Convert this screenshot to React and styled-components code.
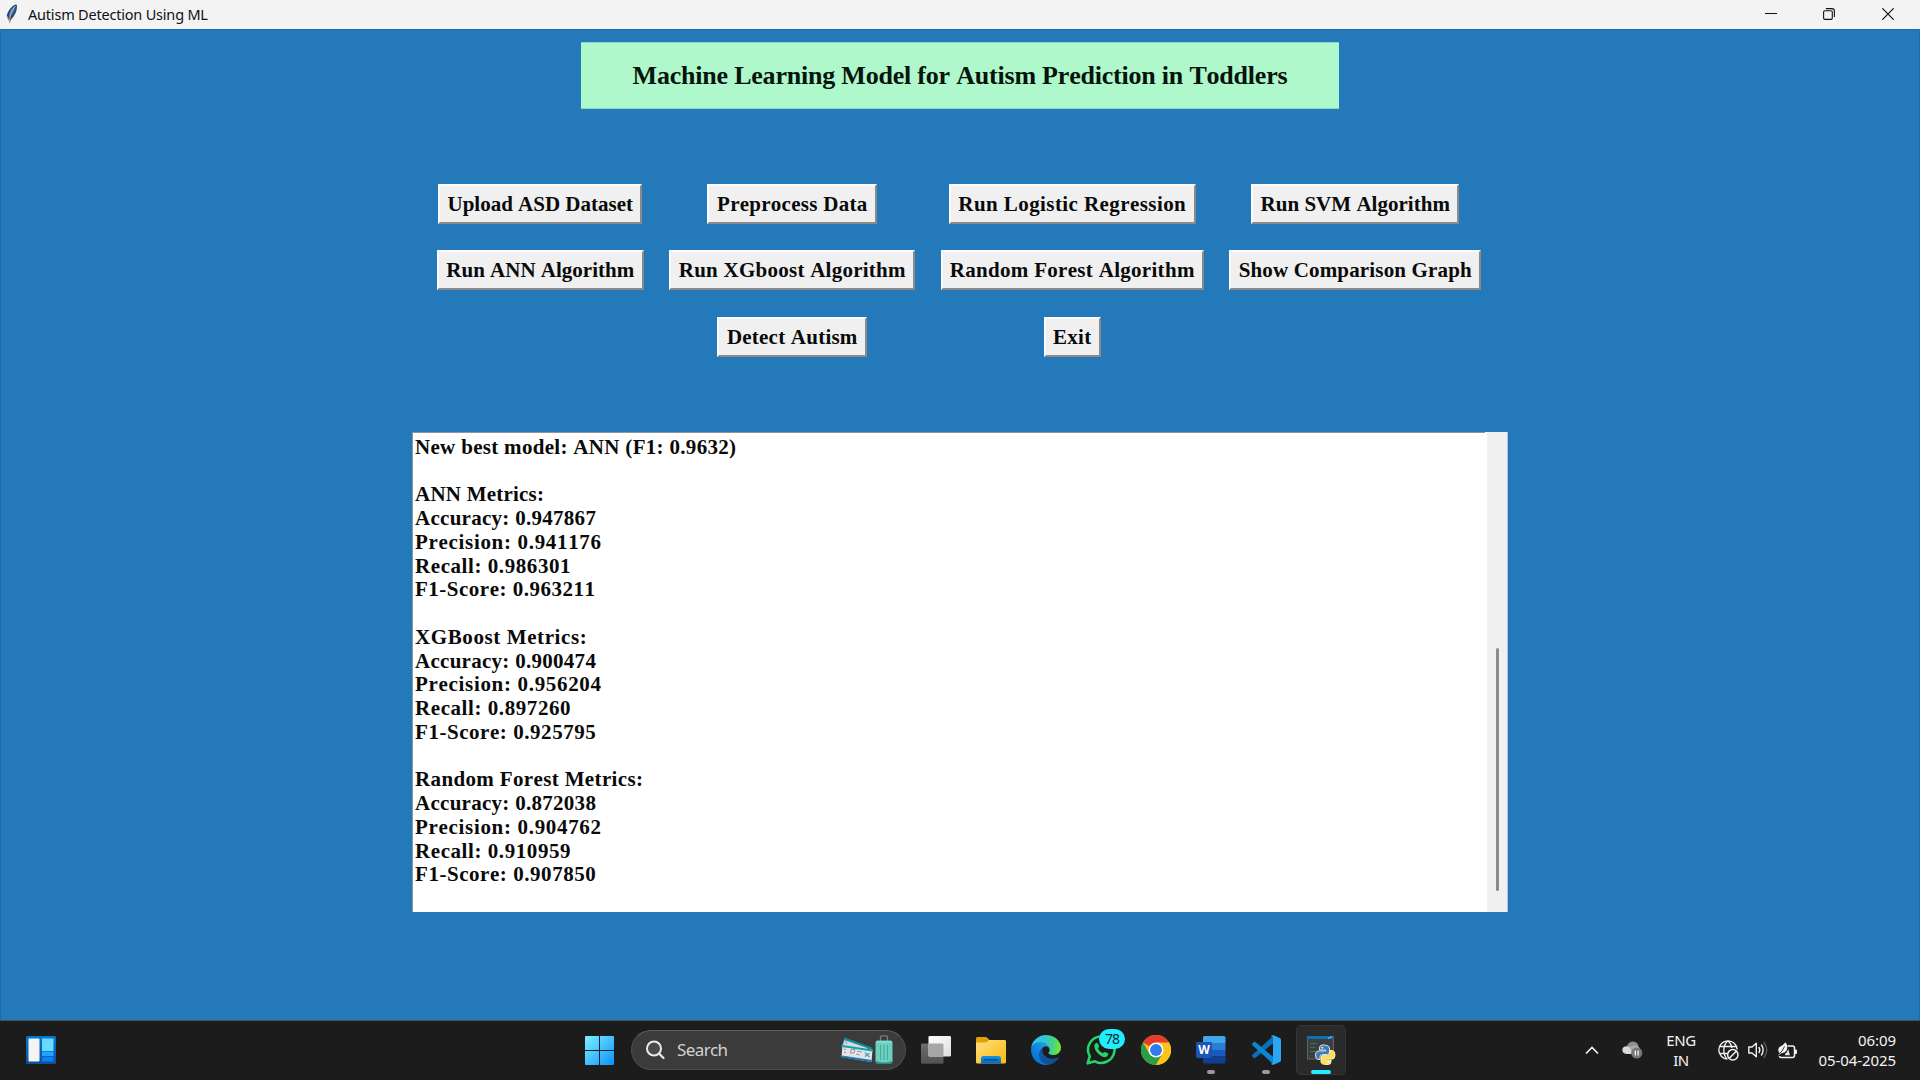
import React from "react";
import styled, { createGlobalStyle } from "styled-components";

const GlobalStyle = createGlobalStyle`
  * { box-sizing: border-box; }
  html, body { margin: 0; padding: 0; overflow: hidden; }
  svg { display: block; flex: none; }
`;

const serif = `"Liberation Serif", "Times New Roman", serif`;
const sans = `"Noto Sans", "Open Sans", sans-serif`;

const Screen = styled.div`
  width: 1920px;
  height: 1080px;
  display: flex;
  flex-direction: column;
  background: #2479ba;
`;

const TitleBar = styled.header`
  height: 29px;
  flex: none;
  display: flex;
  align-items: center;
  background: #f3f3f3;
  padding: 0 3px 1px 6px;
`;

const WindowTitle = styled.span`
  flex: 1;
  margin-left: 10px;
  font: 14.5px/28px ${sans};
  letter-spacing: -0.2px;
  color: #111;
`;

const CaptionButton = styled.button`
  width: 58.5px;
  height: 28px;
  padding: 0;
  border: 0;
  background: none;
  display: flex;
  align-items: center;
  justify-content: center;
`;

const Client = styled.main`
  flex: 1;
  display: flex;
  flex-direction: column;
  align-items: center;
  padding-top: 12px;
  background: #2479ba;
  border: solid #1f6ca8;
  border-width: 1px 1px 0;
  font-kerning: none;
`;

const Banner = styled.h1`
  margin: 0;
  width: 758px;
  height: 67px;
  display: flex;
  align-items: center;
  justify-content: center;
  background: #aff8cb;
  border-top: 1px solid #8fd3c8;
  border-bottom: 1px solid #8fd8c0;
  font: bold 26px/30px ${serif};
  font-kerning: none;
  letter-spacing: -0.21px;
  color: #06140c;
`;

const ButtonGrid = styled.section`
  margin: 75px 2px 0 0;
  display: grid;
  grid-template-columns: 207px 246px 263px 252px;
  grid-auto-rows: 40px;
  column-gap: 25.5px;
  row-gap: 26.3px;
  justify-items: center;
`;

const TkButton = styled.button`
  grid-column: ${(p) => p.$col || "auto"};
  width: ${(p) => p.$width}px;
  height: 40px;
  padding: 0;
  border: 2px solid;
  border-color: #fbfbfb #8c8a88 #8c8a88 #fbfbfb;
  border-radius: 0;
  background: #f0f0f0;
  font: bold 21px/24px ${serif};
  font-kerning: none;
  letter-spacing: ${(p) => p.$track}px;
  white-space: nowrap;
  color: #0a0a0a;
`;

const Output = styled.section`
  margin-top: 75.4px;
  width: 1096px;
  height: 480px;
  display: flex;
  background: #fff;
`;

const LogText = styled.div`
  flex: 1;
  padding: 3px 0 0 2px;
  border: solid #8d949b;
  border-width: 1px 0 0 1px;
  margin-right: 2px;
`;

const LogLine = styled.div`
  height: 23.76px;
  font: bold 21px/23.76px ${serif};
  font-kerning: none;
  letter-spacing: ${(p) => p.$track}px;
  white-space: pre;
  color: #0a0a0a;
`;

const ScrollTrack = styled.div`
  width: 21px;
  background: #f0f0f0;
  border-right: 1px solid #a9c6dc;
  padding: 216px 0 0 9px;
`;

const ScrollThumb = styled.div`
  width: 3px;
  height: 243px;
  border-radius: 1.5px;
  background: #8b8b8b;
`;

const Taskbar = styled.footer`
  height: 60px;
  flex: none;
  display: flex;
  align-items: center;
  padding-bottom: 1px;
  background: #1c1c1c;
  border-top: 1px solid #4a5157;
`;

const TaskSide = styled.div`
  width: 574px;
  padding-left: 26px;
`;

const TaskButton = styled.button`
  width: 50px;
  height: 50px;
  margin-right: ${(p) => p.$gap ?? 5}px;
  padding: 0;
  position: relative;
  display: flex;
  align-items: center;
  justify-content: center;
  border: 1px solid ${(p) => (p.$active ? "#353535" : "transparent")};
  border-radius: 5px;
  background: ${(p) => (p.$active ? "#2a2a2a" : "transparent")};
`;

const RunMark = styled.span`
  position: absolute;
  bottom: 0;
  width: ${(p) => (p.$active ? 20 : 8)}px;
  height: 4px;
  border-radius: 2px;
  background: ${(p) => (p.$active ? "#22ecff" : "#9a9a9a")};
`;

const Badge = styled.span`
  position: absolute;
  top: 3px;
  left: 22px;
  width: 26px;
  height: 20px;
  border-radius: 10px;
  background: #22ecff;
  color: #062b2f;
  font: 14px/20px ${sans};
  letter-spacing: -0.9px;
  text-align: center;
`;

const SearchBox = styled.div`
  width: 275px;
  height: 40px;
  margin-right: 5px;
  padding: 0 12px 0 14px;
  display: flex;
  align-items: center;
  border: 1px solid #4c4c4c;
  border-top-color: #606060;
  border-radius: 20px;
  background: #3b3b3b;
`;

const SearchLabel = styled.span`
  flex: 1;
  margin-left: 12px;
  font: 17px/24px ${sans};
  letter-spacing: -0.55px;
  color: #d2d2d2;
`;

const Tray = styled.div`
  flex: 1;
  display: flex;
  justify-content: flex-end;
  align-items: center;
  padding-right: 24px;
  color: #f4f4f4;
`;

const TrayIcon = styled.span`
  margin-right: ${(p) => p.$gap}px;
`;

const TrayText = styled.div`
  width: ${(p) => p.$width}px;
  margin-right: ${(p) => p.$gap || 0}px;
  text-align: ${(p) => p.$align};
  font: 15px/20px ${sans};
  letter-spacing: ${(p) => p.$track}px;
  white-space: nowrap;
  color: #f4f4f4;
`;

const Feather = () => (
  <svg width="12" height="20" viewBox="0 0 12 20">
    <path d="M9.5.5C5.5 2 1 7.500.8 12.500L3 16.500 3.500 19.500 5 15.500C8.500 12.500 11.800 6 10.800.8Z" fill="#34495e" />
    <path d="M9 2C5.500 4 3 8.500 3 13C6 11 9.500 6.500 9 2Z" fill="#3f83d4" />
    <path d="M9.500 2C6 6 4 10 3.500 18" stroke="#c9ced6" strokeWidth=".8" fill="none" />
    <path d="M1.200 12L3 16.500" stroke="#8d9299" strokeWidth="1" />
  </svg>
);

const Minimize = () => (
  <svg width="12" height="12" viewBox="0 0 12 12"><path d="M0 5.500H12" stroke="#111" /></svg>
);
const Restore = () => (
  <svg width="12" height="12" viewBox="0 0 12 12" fill="none" stroke="#111" strokeWidth="1.100">
    <rect x=".6" y="2.700" width="8.700" height="8.700" rx="1.300" />
    <path d="M2.900.6H8.900A2.500 2.500 0 0 1 11.400 3.100V9" />
  </svg>
);
const Close = () => (
  <svg width="12" height="12" viewBox="0 0 12 12"><path d="M.3.3L11.700 11.700M11.700.3L.3 11.700" stroke="#111" strokeWidth="1.200" /></svg>
);

const Widgets = () => (
  <svg width="30" height="28" viewBox="0 0 30 28">
    <defs>
      <linearGradient id="wg" x1="0" y1="0" x2="0" y2="1"><stop stopColor="#0078d4" /><stop offset="1" stopColor="#124f9b" /></linearGradient>
    </defs>
    <rect width="30" height="28" rx="1.500" fill="url(#wg)" />
    <rect x="2.500" y="2.500" width="11" height="23" rx="1" fill="#f4f4f4" />
    <rect x="16" y="2.500" width="11.500" height="12.500" fill="#69d9ff" />
    <rect x="16" y="15.500" width="11.500" height="4.500" fill="#22a4fb" />
    <rect x="16" y="20.800" width="11.500" height="4.700" fill="#0b83ee" />
  </svg>
);

const Start = () => (
  <svg width="29" height="29" viewBox="0 0 29 29">
    <defs>
      <linearGradient id="st" gradientUnits="userSpaceOnUse" x1="0" y1="0" x2="29" y2="29"><stop stopColor="#7df0ff" /><stop offset="1" stopColor="#0a92fb" /></linearGradient>
    </defs>
    <path d="M0 1Q0 0 1 0H14V14H0ZM15 0H28Q29 0 29 1V14H15ZM0 15H14V29H1Q0 29 0 28ZM15 15H29V28Q29 29 28 29H15Z" fill="url(#st)" />
  </svg>
);

const SearchGlass = () => (
  <svg width="19" height="20" viewBox="0 0 19 20" fill="none">
    <circle cx="8" cy="8.500" r="7" stroke="#e8eaec" strokeWidth="2" fill="#4a4a4a" />
    <path d="M13 13.500L17.500 18" stroke="#e8eaec" strokeWidth="2.200" strokeLinecap="round" />
  </svg>
);

const Travel = () => (
  <svg width="53" height="30" viewBox="0 0 53 30">
    <path d="M4.500 2.500L32 12.500 29 21 1 12Z" fill="#0f8f97" />
    <path d="M4.500 5L27 13 26 18 2.500 12Z" fill="#d5dde0" />
    <path d="M2.500 10L32.500 14.500 31.500 27 1.500 22Z" fill="#e6e3e6" />
    <path d="M2.500 10L32.500 14.500 32.200 16.500 2 12Z" fill="#16a1a5" />
    <path d="M1.700 20.500L31.700 25 31.500 27 1.500 22.300Z" fill="#1277b4" />
    <path d="M5 4.500L7 9M11 14.500H15L14 18H10.500ZM17 16L22 17M16 19L20 20M4 14L6 14.500M4 17L6 17.500" stroke="#8a8ca3" strokeWidth=".9" fill="none" />
    <path d="M25 17.500L29.500 22M29.500 18L25 21.500" stroke="#4aa3c0" strokeWidth="1.500" />
    <path d="M40.500 6V2.500Q40.500.8 42 .8H46Q47.500.8 47.500 2.500V6" stroke="#7a7f87" strokeWidth="1.300" fill="none" />
    <rect x="35.500" y="5.500" width="17" height="23" rx="2" fill="#6ccfbf" />
    <path d="M40.500 10V25M44 10V25M47.500 10V25" stroke="#43ad9f" strokeWidth="1" />
    <path d="M36 27Q44 29.500 52 27" stroke="#2b8e83" strokeWidth="1.500" fill="none" />
    <path d="M37 7H51" stroke="#9be7da" strokeWidth="1" />
  </svg>
);

const TaskView = () => (
  <svg width="30" height="28" viewBox="0 0 30 28">
    <defs>
      <linearGradient id="tv" x1="0" y1="0" x2="1" y2="1"><stop stopColor="#fff" /><stop offset="1" stopColor="#dedede" /></linearGradient>
      <linearGradient id="tb" x1="0" y1="0" x2="0" y2="1"><stop stopColor="#6e6e6e" /><stop offset="1" stopColor="#525252" /></linearGradient>
    </defs>
    <rect x="0" y="7.500" width="22.500" height="20.300" rx="1.300" fill="url(#tb)" />
    <rect x="7.500" y="0" width="22.500" height="20.500" rx="1.300" fill="url(#tv)" />
    <path d="M7.500 7.500H21.200Q22.500 7.500 22.500 8.800V20.500H8.800Q7.500 20.500 7.500 19.200Z" fill="#a7a7a7" />
  </svg>
);

const Explorer = () => (
  <svg width="30" height="27" viewBox="0 0 30 27">
    <defs>
      <linearGradient id="ex" x1="0" y1="0" x2="1" y2="1"><stop stopColor="#ffe081" /><stop offset="1" stopColor="#fbb90c" /></linearGradient>
      <linearGradient id="eb" x1="0" y1="0" x2="0" y2="1"><stop stopColor="#1394e4" /><stop offset="1" stopColor="#0766be" /></linearGradient>
    </defs>
    <path d="M0 1.500Q0 0 1.500 0H9.500Q10.500 0 11.500 1L13.500 3H28.500Q30 3 30 4.500V12H0Z" fill="#e3a008" />
    <path d="M0 5.500H9Q10.500 5.500 11.500 4.500L13 3H28.500Q30 3 30 4.500V25Q30 26.500 28.500 26.500H1.500Q0 26.500 0 25Z" fill="url(#ex)" />
    <path d="M5 26.500V21.500Q5 19 7.500 19H22.500Q25 19 25 21.500V26.500Z" fill="url(#eb)" />
    <path d="M8.800 22.800H21.200" stroke="#064e92" strokeWidth="1.500" strokeLinecap="round" />
  </svg>
);

const Edge = () => (
  <svg width="30" height="30" viewBox="0 0 256 256">
    <defs>
      <linearGradient id="e1" gradientUnits="userSpaceOnUse" x1="60" y1="178" x2="240" y2="178"><stop stopColor="#0c59a4" /><stop offset="1" stopColor="#114a8b" /></linearGradient>
      <linearGradient id="e2" gradientUnits="userSpaceOnUse" x1="150" y1="100" x2="45" y2="220"><stop stopColor="#1b9de2" /><stop offset=".6" stopColor="#1380dc" /><stop offset="1" stopColor="#0078d4" /></linearGradient>
      <linearGradient id="e3" gradientUnits="userSpaceOnUse" x1="10" y1="70" x2="245" y2="100"><stop stopColor="#35c1f1" /><stop offset=".45" stopColor="#32c5d2" /><stop offset=".75" stopColor="#45d480" /><stop offset="1" stopColor="#76e23c" /></linearGradient>
    </defs>
    <path fill="url(#e1)" d="M231 190.500c-3.400 1.800-6.900 3.400-10.500 4.700a101.700 101.700 0 0 1-35.800 6.500c-47.200 0-88.300-32.500-88.300-74.100.1-11.400 6.400-21.900 16.400-27.300-42.700 1.800-53.700 46.300-53.700 72.400 0 73.700 68 81.200 82.600 81.200 7.900 0 19.800-2.300 27-4.600l1.300-.4a128.300 128.300 0 0 0 66.600-52.800 4 4 0 0 0-5.600-5.600Z" />
    <path fill="url(#e2)" d="M105.700 241.400a79.200 79.200 0 0 1-22.700-21.300A80.700 80.700 0 0 1 112.700 100.300c3.200-1.500 8.500-4.100 15.600-4a32.400 32.400 0 0 1 25.700 13 31.900 31.900 0 0 1 6.300 18.700c0-.2 24.500-79.600-80-79.600-43.900 0-80 41.700-80 78.200a130.200 130.200 0 0 0 12.100 56 128 128 0 0 0 156.400 67 75.500 75.500 0 0 1-62.800-8.200Z" />
    <path fill="url(#e3)" d="M152.300 148.900c-.9 1-3.400 2.500-3.400 5.600 0 2.600 1.700 5.200 4.800 7.300 14.300 10 41.400 8.600 41.500 8.600a59.600 59.600 0 0 0 30.300-8.300 61.400 61.400 0 0 0 30.400-52.900c.3-22.400-8-37.300-11.300-43.900C223.500 23.900 177.700 0 128 0A128 128 0 0 0 0 126.200c.5-36.500 36.800-66 80-66 3.500 0 23.500.3 42 10.100 16.300 8.600 24.900 18.900 30.800 29.200 6.200 10.700 7.300 24.100 7.300 29.500 0 5.300-2.700 13.300-7.800 19.900Z" />
  </svg>
);

const WhatsApp = () => (
  <svg width="30" height="30" viewBox="0 0 30 30" fill="none">
    <path d="M15.500 1.500A13.200 13.200 0 1 1 9 26.300L1.700 28.300 3.800 21.200A13.200 13.200 0 0 1 15.500 1.500Z" stroke="#25d366" strokeWidth="2.600" strokeLinejoin="round" />
    <path d="M9.300 8.500C10.500 7.300 11.600 7.700 12 8.700L13 11C13.300 12 12.100 12.900 12.100 13.600C13 15.600 14.700 17.200 16.700 18C17.400 18 18.300 16.700 19.200 17L21.800 18.300C22.700 18.900 22.200 20.500 21 21.400C18.800 23 15.600 21.900 12.500 19C9.200 15.900 6.900 11.200 9.300 8.500Z" fill="#25d366" />
  </svg>
);

const Chrome = () => (
  <svg width="30" height="30" viewBox="0 0 48 48">
    <circle cx="24" cy="24" r="24" fill="#fbc116" />
    <path d="M24 24L3.200 12A24 24 0 0 1 44.800 12Z" fill="#e33b2e" />
    <path d="M3.200 12A24 24 0 0 0 24 48L34.400 30L13.600 30Z" fill="#2a9d48" />
    <path d="M24 12H44.800A24 24 0 0 1 24 48L34.400 30Z" fill="#fcc31b" />
    <circle cx="24" cy="24" r="12" fill="#fff" />
    <circle cx="24" cy="24" r="9.500" fill="#2f7bea" />
  </svg>
);

const WordMark = styled.span`
  position: absolute;
  left: 9px;
  top: 16px;
  width: 16px;
  height: 16px;
  color: #fff;
  font: bold 12px/16px ${sans};
  text-align: center;
`;

const Word = () => (
  <svg width="30" height="28" viewBox="0 0 30 28">
    <path d="M8.500 0H28Q29.500 0 29.500 1.500V7H7V1.500Q7 0 8.500 0Z" fill="#41a5ee" />
    <path d="M7 7H29.500V14H7Z" fill="#2b7cd3" />
    <path d="M7 14H29.500V20.500H7Z" fill="#185abd" />
    <path d="M7 20.500H29.500V26Q29.500 27.500 28 27.500H8.500Q7 27.500 7 26Z" fill="#103f91" />
    <rect x="0" y="6" width="16" height="16" rx="1.400" fill="#1b54b6" />
  </svg>
);

const VSCode = () => (
  <svg width="30" height="30" viewBox="0 0 30 30">
    <path d="M22 8.200V1L2 19.200Q.2 20.500 1.300 21.600L2.500 22.800Q3.500 23.600 4.700 22.700Z" fill="#0a6fb8" />
    <path d="M22 21.800V29L2 10.800Q.2 9.500 1.300 8.400L2.500 7.200Q3.500 6.400 4.700 7.300Z" fill="#0c86d2" />
    <path d="M21.700 29.800Q20.500 29.500 20 28.700L22 28V2L20 1.300Q20.500.4 21.700.2H22.500L28.800 3Q30 3.600 30 5V25Q30 26.400 28.800 27L22.500 29.800Z" fill="#29a7f3" />
  </svg>
);

const PythonWindow = () => (
  <svg width="30" height="30" viewBox="0 0 30 30">
    <rect x="1.500" y="1.500" width="26" height="22.500" fill="#3b3d40" stroke="#606468" />
    <path d="M1 1H28V4H1Z" fill="#0f6fb3" />
    <path d="M22 3.500L26 1.500" stroke="#8cc9ee" />
    <path d="M4 8.500H11M4 12.500H9M4 16.500H10" stroke="#347b39" strokeWidth="1.200" />
    <path d="M19 10H16Q13.500 10.300 13.500 13V15H19.500V16H12Q9.500 16.500 9.500 20Q9.500 24 12 24.500H14V22Q14 19.500 16.500 19.500H21.500Q23.500 19.300 23.500 17V13Q23.500 10.500 19 10Z" fill="#3d7cb1" stroke="#e8edf0" strokeWidth=".9" />
    <path d="M20 29.500H22.500Q25 29.200 25 27V25H19V24H26.500Q29 23.700 29 20Q29 16 26.500 15.500H24V18Q24 20.200 21.800 20.200H17Q15 20.500 15 23V27Q15 29.300 20 29.500Z" fill="#ffdc50" stroke="#fff6cf" strokeWidth=".9" />
    <circle cx="16.300" cy="12.700" r=".9" fill="#fff" />
    <circle cx="22.300" cy="27" r=".9" fill="#fff" />
  </svg>
);

const Chevron = () => (
  <svg width="14" height="9" viewBox="0 0 14 9"><path d="M1 7.500L7 1.500L13 7.500" fill="none" stroke="#f2f2f2" strokeWidth="1.700" /></svg>
);

const Cloud = () => (
  <svg width="21" height="18" viewBox="0 0 21 18">
    <path d="M5 5Q7 .3 11 .5Q15.500.8 16.500 5L10 9Z" fill="#8f8f8f" />
    <path d="M4.500 13Q.3 12.500.3 9Q.5 5.500 4.500 5.200Q7 5 9 7L17 8Q17.500 12 15 13Z" fill="#d8d8d8" />
    <path d="M10 5Q15 3 17 6L18.500 9 11 12 7 6Z" fill="#aaa" />
    <circle cx="14.700" cy="12" r="5.600" fill="#777" />
    <path d="M13.300 9.500V14.500M16.100 9.500V14.500" stroke="#fff" strokeWidth="1.200" />
  </svg>
);

const Globe = () => (
  <svg width="21" height="21" viewBox="0 0 21 21" fill="none" stroke="#f2f2f2" strokeWidth="1.300">
    <path d="M9.500 19.200A9.200 9.200 0 1 1 19.200 9.500M10 .8Q5.800 4.500 5.800 10T9 19M10 .8Q13 3.500 14 8M1.500 6.500H18.500M1.500 13.500H9" />
    <circle cx="14.800" cy="14.800" r="5.200" strokeWidth="1.500" />
    <path d="M11.300 18.300L18.300 11.300" strokeWidth="1.500" />
  </svg>
);

const Speaker = () => (
  <svg width="20" height="18" viewBox="0 0 20 18" fill="none" stroke="#f2f2f2" strokeWidth="1.400" strokeLinecap="round">
    <path d="M.8 6V12H4L8.300 15.800V2.200L4 6Z" strokeLinejoin="round" />
    <path d="M11 6.500Q12.700 9 11 11.500M13.500 4Q16.800 9 13.500 14" />
    <path d="M16 1.500Q21.500 9 16 16.500" stroke="#5a5a5a" />
  </svg>
);

const Battery = () => (
  <svg width="21" height="17" viewBox="0 0 21 17">
    <path d="M10.500 4H15.500Q17.500 4 17.500 6V13.500Q17.500 15.500 15.500 15.500H4Q2.500 15.500 2.500 14" fill="none" stroke="#f2f2f2" strokeWidth="1.500" />
    <path d="M18 7.500H19Q20 7.500 20 8.500V11Q20 12 19 12H18Z" fill="#f2f2f2" />
    <path d="M10.800 8Q10.300 10.500 8 12V13.300H13L11.200 7Z" fill="#e4e4e4" />
    <path d="M8.500.2Q11.500 4 9.500 8.500Q8 11 4.500 11.300L1 13.500L2.500 10.800Q0 8 2.500 5Q6 3.500 8.500.2Z" fill="#f4f4f4" />
    <path d="M1.800 12.500Q5.500 9.500 7.500 4.500" stroke="#1c1c1c" strokeWidth=".9" fill="none" />
  </svg>
);

const actions = [
  { label: "Upload ASD Dataset", width: 204, track: 0 },
  { label: "Preprocess Data", width: 170, track: 0.27 },
  { label: "Run Logistic Regression", width: 247, track: 0.42 },
  { label: "Run SVM Algorithm", width: 208, track: 0.02 },
  { label: "Run ANN Algorithm", width: 207, track: 0 },
  { label: "Run XGboost Algorithm", width: 246, track: 0.25 },
  { label: "Random Forest Algorithm", width: 263, track: 0.3 },
  { label: "Show Comparison Graph", width: 252, track: 0.16 },
  { label: "Detect Autism", width: 150, track: 0.23, col: 2 },
  { label: "Exit", width: 57, track: 0.25, col: 3 },
];

const log = [
  ["New best model: ANN (F1: 0.9632)", 0.31],
  ["", 0],
  ["ANN Metrics:", 0.22],
  ["Accuracy: 0.947867", 0.28],
  ["Precision: 0.941176", 0.68],
  ["Recall: 0.986301", 0.57],
  ["F1-Score: 0.963211", 0.5],
  ["", 0],
  ["XGBoost Metrics:", 0.6],
  ["Accuracy: 0.900474", 0.28],
  ["Precision: 0.956204", 0.68],
  ["Recall: 0.897260", 0.57],
  ["F1-Score: 0.925795", 0.55],
  ["", 0],
  ["Random Forest Metrics:", 0.36],
  ["Accuracy: 0.872038", 0.28],
  ["Precision: 0.904762", 0.68],
  ["Recall: 0.910959", 0.57],
  ["F1-Score: 0.907850", 0.55],
];

export default function App() {
  return (
    <Screen>
      <GlobalStyle />
      <TitleBar>
        <Feather />
        <WindowTitle>Autism Detection Using ML</WindowTitle>
        <CaptionButton><Minimize /></CaptionButton>
        <CaptionButton><Restore /></CaptionButton>
        <CaptionButton><Close /></CaptionButton>
      </TitleBar>
      <Client>
        <Banner>Machine Learning Model for Autism Prediction in Toddlers</Banner>
        <ButtonGrid>
          {actions.map((a) => (
            <TkButton key={a.label} $width={a.width} $track={a.track} $col={a.col}>{a.label}</TkButton>
          ))}
        </ButtonGrid>
        <Output>
          <LogText>
            {log.map(([text, track], i) => (
              <LogLine key={i} $track={track}>{text}</LogLine>
            ))}
          </LogText>
          <ScrollTrack><ScrollThumb /></ScrollTrack>
        </Output>
      </Client>
      <Taskbar>
        <TaskSide><Widgets /></TaskSide>
        <TaskButton $gap={7}><Start /></TaskButton>
        <SearchBox>
          <SearchGlass />
          <SearchLabel>Search</SearchLabel>
          <Travel />
        </SearchBox>
        <TaskButton><TaskView /></TaskButton>
        <TaskButton><Explorer /></TaskButton>
        <TaskButton><Edge /></TaskButton>
        <TaskButton><WhatsApp /><Badge>78</Badge></TaskButton>
        <TaskButton><Chrome /></TaskButton>
        <TaskButton><Word /><WordMark>W</WordMark><RunMark /></TaskButton>
        <TaskButton><VSCode /><RunMark /></TaskButton>
        <TaskButton $active $gap={0}><PythonWindow /><RunMark $active /></TaskButton>
        <Tray>
          <TrayIcon $gap={23}><Chevron /></TrayIcon>
          <TrayIcon $gap={18}><Cloud /></TrayIcon>
          <TrayText $width={40} $align="center" $track={-0.4} $gap={17}>ENG<br />IN</TrayText>
          <TrayIcon $gap={9}><Globe /></TrayIcon>
          <TrayIcon $gap={9}><Speaker /></TrayIcon>
          <TrayIcon $gap={18}><Battery /></TrayIcon>
          <TrayText $width={80} $align="right" $track={-0.08}>06:09<br />05-04-2025</TrayText>
        </Tray>
      </Taskbar>
    </Screen>
  );
}
